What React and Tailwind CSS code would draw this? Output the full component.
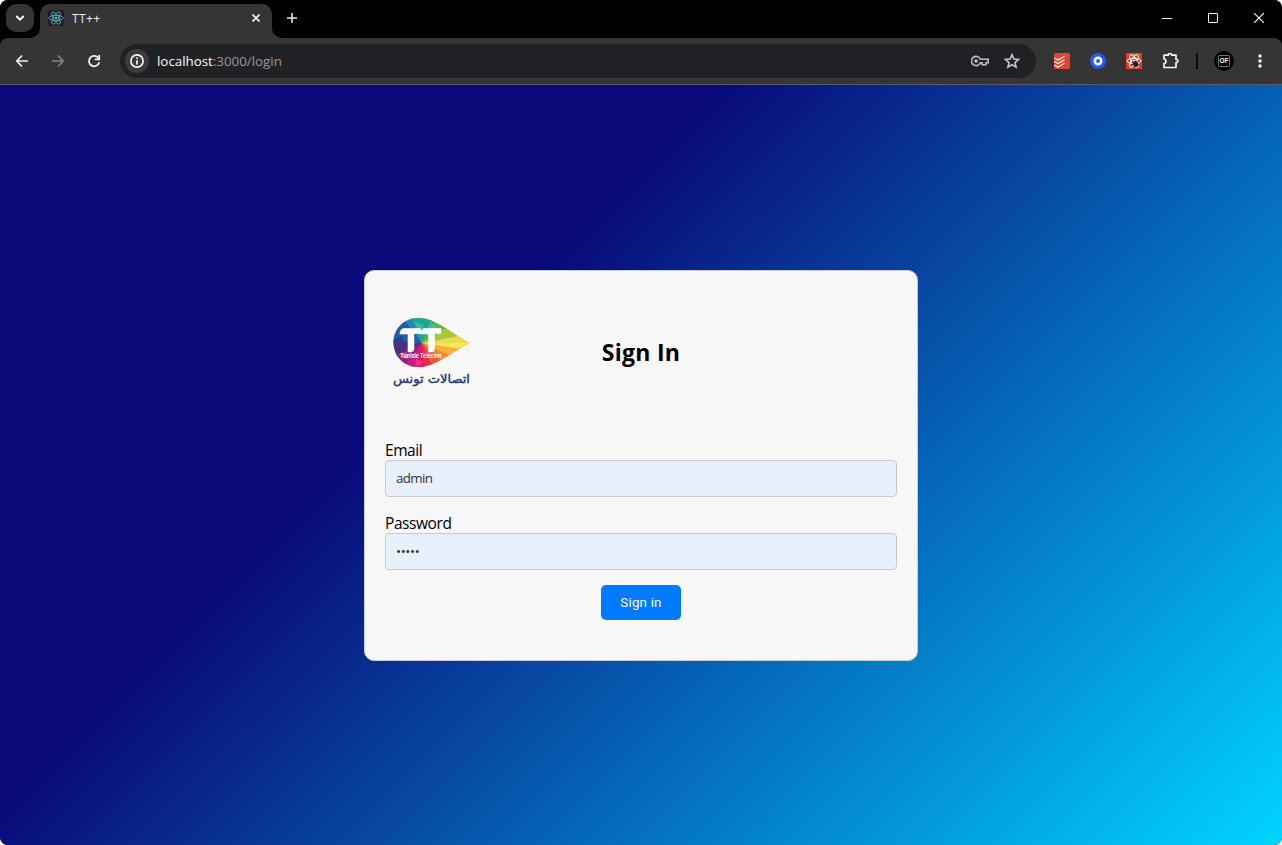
import React from "react";

const S = "font-['Open_Sans','Noto_Sans',sans-serif]";

function ReactMark({ size, stroke, width }) {
  return (
    <svg width={size} height={size} viewBox="-8 -8 16 16" fill="none" stroke={stroke} strokeWidth={width}>
      <ellipse rx="7" ry="2.7" />
      <ellipse rx="7" ry="2.7" transform="rotate(60)" />
      <ellipse rx="7" ry="2.7" transform="rotate(120)" />
      <circle r="1.3" fill={stroke} stroke="none" />
    </svg>
  );
}

function TabStrip() {
  return (
    <div className="flex h-[38px] items-start bg-black">
      <button className="ml-[6px] mt-[4px] flex h-7 w-7 items-center justify-center rounded-[10px] bg-[#353535]">
        <svg width="10" height="8" viewBox="0 0 10 8" fill="none" stroke="#fff" strokeWidth="1.8"><path d="M1.3 2l3.7 3.7L8.7 2" /></svg>
      </button>
      <svg className="mt-[28px] -ml-[4px] shrink-0" width="10" height="10"><path d="M10 0v10H0A10 10 0 0 0 10 0z" fill="#353535" /></svg>
      <div className="mt-1 flex h-[34px] w-[232px] items-center rounded-t-[10px] bg-[#353535] pb-[6px] pl-2">
        <span className="flex h-4 w-4 items-center justify-center rounded-[2px] bg-[#212121]">
          <ReactMark size={16} stroke="#58c4dc" width={0.8} />
        </span>
        <span className={`ml-[8px] pt-px text-[12px] leading-4 tracking-[0.35px] text-[#f1f1f1] ${S}`}>TT++</span>
        <svg className="ml-auto mr-[12px]" width="8" height="8" viewBox="0 0 8 8" stroke="#f1f1f1" strokeWidth="1.6"><path d="M.5.5l7 7M7.5.5l-7 7" /></svg>
      </div>
      <svg className="mt-[28px] shrink-0" width="10" height="10"><path d="M0 0v10H10A10 10 0 0 1 0 0z" fill="#353535" /></svg>
      <svg className="ml-[5px] mt-[13px]" width="10" height="10" viewBox="0 0 10 10" stroke="#e8e8e8" strokeWidth="1.6"><path d="M5 0v10M0 5h10" /></svg>
      <div className="ml-auto mt-[13px] flex items-center gap-9 pr-[18px]">
        <svg width="10" height="10" stroke="#fff"><path d="M0 5.5h10" /></svg>
        <svg width="10" height="10" fill="none" stroke="#fff"><rect x=".5" y=".5" width="9" height="9" rx=".5" /></svg>
        <svg width="10" height="10" stroke="#fff" strokeWidth="1.1"><path d="M0 0l10 10M10 0L0 10" /></svg>
      </div>
    </div>
  );
}

function Toolbar() {
  return (
    <div className="h-[47px] bg-black">
      <div className="flex h-full items-center rounded-t-[8px] border-b border-[#5c5c5c] bg-[#353535]">
        <svg className="ml-[15px]" width="14" height="14" viewBox="0 0 14 14" fill="none" stroke="#f1f1f1" strokeWidth="1.7"><path d="M13 7H2M7 1.5L1.8 7 7 12.5" /></svg>
        <svg className="ml-[22px]" width="14" height="14" viewBox="0 0 14 14" fill="none" stroke="#858585" strokeWidth="1.6"><path d="M1 7h11M7 1.5L12.2 7 7 12.5" /></svg>
        <svg className="ml-[22px]" width="14" height="14" viewBox="0 0 14 14" fill="none" stroke="#f1f1f1" strokeWidth="1.8"><path d="M12.2 8.2A5.2 5.2 0 1 1 11.5 4.2" /><path d="M12.2 1v4.300H7.800" /></svg>
        <div className="ml-[19px] flex h-[34px] w-[916px] items-center rounded-full bg-[#1f2125] pl-[5px] pr-[16px]">
          <span className="flex h-6 w-6 items-center justify-center rounded-full bg-[#3c3c3c]">
            <svg width="14" height="14" viewBox="0 0 14 14" fill="none" stroke="#fff" strokeWidth="1.6"><circle cx="7" cy="7" r="6.1" /><path d="M7 6.2v4.200M7 3.500v1.600" /></svg>
          </span>
          <span className={`ml-2 text-[13.4px] leading-5 tracking-[-0.03px] text-[#9a9a9a] ${S}`}><span className="text-[#fafafa]">localhost</span>:3000/login</span>
          <svg className="ml-auto" width="18" height="12" viewBox="0 0 18 12" fill="none" stroke="#c0c0c0" strokeWidth="1.6"><path d="M9.3 4.300A4.600 4.600 0 1 0 9.300 7.700H11.200V9.800H15V7.700H17.200V4.300z" /><circle cx="5" cy="6" r="1.8" fill="#c0c0c0" stroke="none" /></svg>
          <svg className="ml-[15px]" width="16" height="16" viewBox="0 0 16 16" fill="none" stroke="#c7c7c7" strokeWidth="1.6"><path d="M8 1.7l1.900 4.400 4.700.4-3.600 3.100 1.100 4.600L8 11.800l-4.100 2.400L5 9.600 1.400 6.500l4.700-.4z" /></svg>
        </div>
        <svg className="ml-[18px]" width="16" height="16" viewBox="0 0 16 16" fill="none" stroke="#fff" strokeWidth="1.1"><rect width="16" height="16" rx="1.5" fill="#e44332" stroke="none" /><path d="M0 5l4 2 6.500-3.800M0 8.500l4 2 6.500-3.800M0 12l4 2 6.500-3.800" /></svg>
        <svg className="ml-[20px]" width="16" height="16" viewBox="0 0 16 16"><circle cx="8" cy="8" r="8" fill="#2459ef" /><circle cx="8" cy="8" r="3.2" fill="none" stroke="#fff" strokeWidth="2.6" /></svg>
        <span className="relative ml-5 flex h-4 w-4 items-center justify-center bg-[#df4034]">
          <ReactMark size={16} stroke="#fff" width={1} />
          <svg className="absolute left-[5px] top-[6px]" width="9" height="9" viewBox="0 0 9 9"><ellipse cx="4.5" cy="5" rx="2.5" ry="3.2" fill="#222" transform="rotate(-35 4.5 5)" /><path d="M1 3l7 3M.5 6l6-4M2 8.500l5-5" stroke="#222" strokeWidth=".8" /></svg>
        </span>
        <svg className="ml-[20px]" width="18" height="18" viewBox="0 0 18 18" fill="none" stroke="#f4f4f4" strokeWidth="1.7" strokeLinejoin="round"><path d="M2 3.200h4.200V2.800a1.800 1.200 0 0 1 3.600 0V3.200H14v4.300h.6a1.300 1.600 0 0 1 0 3.200H14V15.500H2v-3.900c2.600-.4 2.600-4.200 0-4.600z" /></svg>
        <span className="ml-[16px] h-4 w-[2px] bg-[#0b0b0b]" />
        <span className="ml-4 flex h-5 w-5 items-center justify-center rounded-full bg-black">
          <svg width="12" height="12" viewBox="0 0 12 12"><rect x=".5" y=".5" width="11" height="11" rx="1" fill="none" stroke="#909090" strokeWidth=".8" /><text x="6" y="8.300" textAnchor="middle" fontFamily="Liberation Sans" fontSize="6.4" fontWeight="700" fill="#fff">OF</text></svg>
        </span>
        <svg className="ml-[24px]" width="4" height="14" fill="#f4f4f4"><circle cx="2" cy="2" r="1.7" /><circle cx="2" cy="7" r="1.7" /><circle cx="2" cy="12" r="1.7" /></svg>
      </div>
    </div>
  );
}

function Logo() {
  return (
    <div className="relative h-[72px] w-20">
      <svg width="80" height="52" viewBox="0 0 80 52">
        <defs>
          <clipPath id="drop"><path d="M26 1C12 1 1.5 12 1.5 25.500S12 50 26 50C40 50 50 42 77 26 50 9 40 1 26 1z" /></clipPath>
        </defs>
        <g clipPath="url(#drop)">
          <rect width="80" height="52" fill="#f08a2c" />
          <path d="M30 26L0 25V8L12 0z" fill="#1f5ea8" />
          <path d="M30 26L10 0H20z" fill="#2188b8" />
          <path d="M30 26L19 0H32z" fill="#12aaa0" />
          <path d="M30 26L31 0H46z" fill="#1fa884" />
          <path d="M30 26L45 0 60 16z" fill="#5bb549" />
          <path d="M30 26L54 11 66 19z" fill="#a4c93a" />
          <path d="M30 26L66 19 80 26z" fill="#e9dc4c" />
          <path d="M30 26H80L62 36z" fill="#f5e65a" />
          <path d="M30 26L70 32 56 40z" fill="#f5b236" />
          <path d="M30 26L58 38 46 46z" fill="#f58a2a" />
          <path d="M30 26L50 44 40 52z" fill="#f0582f" />
          <path d="M30 26L42 52H30z" fill="#e8323b" />
          <path d="M30 26L33 52H18z" fill="#ea1668" />
          <path d="M30 26L21 52 10 48z" fill="#c0207e" />
          <path d="M30 26L12 50 3 38z" fill="#85277f" />
          <path d="M30 26L4 42 0 24z" fill="#493083" />
          <path d="M0 25L9 18 12 26z" fill="#27448e" />
          <path d="M22 4L32 9 27 14zM39 4L47 14 35 12z" fill="#54c2a0" opacity=".65" />
          <path d="M5 38L15 34 17 43zM24 42L32 45 24 50z" fill="#f3448a" opacity=".6" />
        </g>
        <path d="M8 16Q8.500 11.500 12.500 11.500H28.500V16.500H22V31.500Q22 35 18.500 35H16V17H8zM28.500 16Q29 11.500 33 11.500H49V16.500H42.500V31.500Q42.500 35 39 35H36.500V17H28.500z" fill="#fff" stroke="#fff" strokeWidth=".6" strokeLinejoin="round" />
        <text x="8.5" y="40.800" textLength="41" lengthAdjust="spacingAndGlyphs" fontFamily="Open Sans" fontSize="6.6" fontWeight="700" fill="#fff">Tunisie Telecom</text>
      </svg>
      <svg className="absolute left-[-4px] top-[50px]" width="88" height="28" viewBox="0 0 88 28">
        <text x="43.5" y="15.500" direction="rtl" textAnchor="middle" textLength="77" lengthAdjust="spacingAndGlyphs" fontFamily="DejaVu Sans" fontSize="12" fill="#293b75" stroke="#293b75" strokeWidth=".45">اتصالات تونس</text>
      </svg>
    </div>
  );
}

function Field({ label, type, value }) {
  return (
    <label className="flex flex-col">
      <span className={`h-[21px] pt-px text-[15.5px] leading-[21px] tracking-[-0.42px] text-black ${S}`}>{label}</span>
      <input
        type={type}
        defaultValue={value}
        className={`h-[37px] w-full rounded-[4px] border border-[#c9c9cc] bg-[#e8f0fe] px-[10px] text-[13.333px] tracking-[-0.6px] text-[#333] outline-none [&[type=password]]:tracking-[-0.35px] ${S}`}
      />
    </label>
  );
}

export default function App() {
  return (
    <div className="flex h-[845px] w-[1282px] flex-col overflow-hidden rounded-[8px] bg-black">
      <TabStrip />
      <Toolbar />
      <main className="flex flex-1 items-center justify-center bg-[linear-gradient(135deg,#090979_0%,#090979_35%,#00d4ff_100%)]">
        <form className="flex h-[391px] w-[554px] flex-col rounded-[10px] border border-[#ccc] bg-[#f7f7f7] px-5">
          <div className="mt-[46px] grid grid-cols-[1fr_auto_1fr] items-center">
            <div className="pl-[7px]"><Logo /></div>
            <h2 className={`pb-[2px] text-[23px] font-bold leading-8 tracking-[0.28px] text-black ${S}`}>Sign In</h2>
          </div>
          <div className="mt-[50px] flex flex-col gap-[15px]">
            <Field label="Email" type="text" value="admin" />
            <Field label="Password" type="password" value="admin" />
          </div>
          <button type="button" className="mt-[15px] h-[35px] w-20 self-center rounded-[5px] bg-[#007bff] pt-px font-[Roboto,sans-serif] text-[13.333px] tracking-[0.2px] text-white">Sign in</button>
        </form>
      </main>
    </div>
  );
}
